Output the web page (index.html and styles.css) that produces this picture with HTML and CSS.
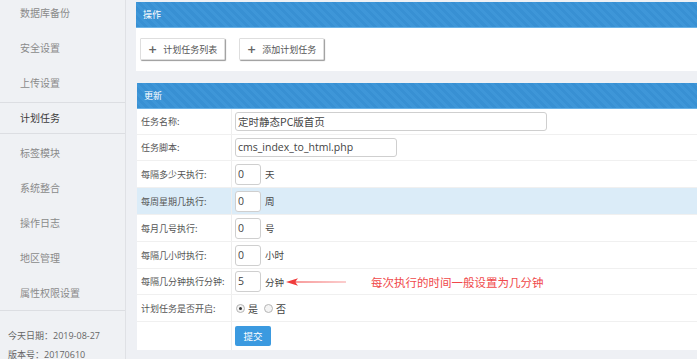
FILE: index.html
```
<!DOCTYPE html>
<html lang="zh-CN">
<head>
<meta charset="utf-8">
<title>计划任务</title>
<link rel="stylesheet" href="styles.css">
</head>
<body>
<aside class="sidebar">
  <ul class="menu">
    <li class="menu-item">数据库备份</li>
    <li class="menu-item">安全设置</li>
    <li class="menu-item">上传设置</li>
    <li class="menu-item active">计划任务</li>
    <li class="menu-item">标签模块</li>
    <li class="menu-item">系统整合</li>
    <li class="menu-item">操作日志</li>
    <li class="menu-item">地区管理</li>
    <li class="menu-item">属性权限设置</li>
  </ul>
  <div class="info">
    <p class="info-line">今天日期：2019-08-27</p>
    <p class="info-line">版本号：20170610</p>
  </div>
</aside>
<main class="content">
  <section class="panel">
    <div class="panel-head">操作</div>
    <div class="panel-body actions">
      <button class="btn"><span class="plus">+</span>计划任务列表</button>
      <button class="btn"><span class="plus">+</span>添加计划任务</button>
    </div>
  </section>
  <section class="panel panel-form">
    <div class="panel-head">更新</div>
    <div class="form">
      <div class="row"><div class="label">任务名称:</div><div class="value"><span class="input input-wide">定时静态PC版首页</span></div></div>
      <div class="row"><div class="label">任务脚本:</div><div class="value"><span class="input input-mid latin">cms_index_to_html.php</span></div></div>
      <div class="row tall"><div class="label">每隔多少天执行:</div><div class="value"><span class="input input-small latin">0</span><span class="unit">天</span></div></div>
      <div class="row tall hl"><div class="label">每周星期几执行:</div><div class="value"><span class="input input-small latin">0</span><span class="unit">周</span></div></div>
      <div class="row tall"><div class="label">每月几号执行:</div><div class="value"><span class="input input-small latin">0</span><span class="unit">号</span></div></div>
      <div class="row tall"><div class="label">每隔几小时执行:</div><div class="value"><span class="input input-small latin">0</span><span class="unit">小时</span></div></div>
      <div class="row"><div class="label">每隔几分钟执行分钟:</div><div class="value"><span class="input input-small latin">5</span><span class="unit">分钟</span>
        <svg class="arrow" width="60" height="10" viewBox="0 0 60 10"><path d="M0 5 L12 1.2 L9.5 4.4 L60 4.7 L60 5.3 L9.5 5.6 L12 8.8 Z" fill="#f03c3c"/></svg>
        <span class="note">每次执行的时间一般设置为几分钟</span></div></div>
      <div class="row tall"><div class="label">计划任务是否开启:</div><div class="value"><span class="radio checked"></span><span class="radio-text">是</span><span class="radio"></span><span class="radio-text">否</span></div></div>
      <div class="row last"><div class="label"></div><div class="value"><button class="submit">提交</button></div></div>
    </div>
  </section>
</main>
</body>
</html>
```
FILE: styles.css
```
* { box-sizing: border-box; }
html, body { margin: 0; padding: 0; }
body {
  width: 697px;
  height: 359px;
  overflow: hidden;
  display: flex;
  background: #eef0f4;
  font-family: "Noto Sans CJK SC", "Noto Sans", sans-serif;
  color: #555;
}
.sidebar {
  width: 126px;
  flex: none;
  background: #eff1f4;
  border-right: 1px solid #dfe1e5;
  display: flex;
  flex-direction: column;
}
.menu {
  list-style: none;
  margin: -5px 0 0;
  padding: 0;
  border-bottom: 1px solid #dcdee2;
}
.menu-item {
  height: 35px;
  line-height: 35px;
  padding-left: 20px;
  font-size: 10px;
  color: #8a8a8a;
}
.menu-item.active {
  color: #3a3a3a;
  background:
    linear-gradient(#dcdee2, #dcdee2) 0 2px / 100% 1px no-repeat,
    linear-gradient(#dcdee2, #dcdee2) 0 33px / 100% 1px no-repeat;
}
.info { padding: 15px 0 0 8px; }
.info-line {
  margin: 0;
  font-family: "Open Sans", "Noto Sans CJK SC", sans-serif;
  font-size: 9px;
  line-height: 19px;
  color: #666;
}
.content {
  flex: 1;
  padding: 2px 0 0 10px;
  display: flex;
  flex-direction: column;
  gap: 12px;
  min-width: 0;
}
.panel { background: #fff; }
.panel-form { margin-left: 1px; }
.panel-head {
  height: 26px;
  line-height: 25px;
  padding-left: 7px;
  font-size: 9px;
  color: #fff;
  border-bottom: 1px solid #6bb2e6;
  background: repeating-linear-gradient(45deg, #3890d3 0 3px, #3e96d8 3px 6px);
}
.actions {
  height: 43px;
  padding: 10px 0 0 4px;
  display: flex;
  gap: 14px;
  align-items: flex-start;
}
.btn {
  width: 85px;
  height: 22px;
  padding: 0 0 0 7px;
  border: 1px solid #dedede;
  border-radius: 1px;
  background: #fff;
  box-shadow: 1px 1px 1px #9a9a9a;
  font-family: "Noto Sans CJK SC", sans-serif;
  font-size: 9px;
  color: #555;
  display: flex;
  align-items: center;
}
.plus {
  font-size: 11px;
  font-weight: bold;
  color: #666;
  margin-right: 6px;
  font-family: "DejaVu Sans", sans-serif;
}
.form { display: flex; flex-direction: column; }
.row {
  display: flex;
  height: 26px;
  border-bottom: 1px solid #f0f0f0;
}
.row.tall { height: 27px; }
.row.last { height: 28px; border-bottom: none; }
.row.hl { background: #dbecf8; }
.label {
  width: 95px;
  flex: none;
  padding-left: 4px;
  font-size: 9px;
  display: flex;
  align-items: center;
  border-right: 1px solid #eeeeee;
}
.value {
  flex: 1;
  display: flex;
  align-items: center;
  padding-left: 3px;
}
.input {
  height: 19px;
  border: 1px solid #cfcfcf;
  border-radius: 3px;
  background: #fff;
  padding-left: 2px;
  font-size: 10.5px;
  line-height: 17px;
  color: #444;
  white-space: nowrap;
}
.latin { font-family: "Open Sans", "Noto Sans CJK SC", sans-serif; }
.input-wide { width: 312px; }
.input-mid { width: 162px; }
.input-small { width: 26px; height: 21px; line-height: 19px; }
.unit {
  font-size: 9.5px;
  margin-left: 4px;
  color: #444;
}
.arrow { margin-left: 2px; flex: none; }
.note {
  margin-left: 25px;
  font-size: 11.5px;
  color: #f0484a;
}
.radio {
  width: 9px;
  height: 9px;
  border: 1px solid #b5b5b5;
  border-radius: 50%;
  background: #f4f4f4;
  margin-left: 1px;
  display: flex;
  align-items: center;
  justify-content: center;
}
.radio.checked::after {
  content: "";
  width: 3px;
  height: 3px;
  border-radius: 50%;
  background: #333;
}
.radio-text {
  font-size: 10px;
  color: #444;
  margin: 0 5px 0 3px;
}
.submit {
  width: 36px;
  height: 20px;
  border: none;
  border-radius: 2px;
  background: #3b9ae0;
  color: #fff;
  font-family: "Noto Sans CJK SC", sans-serif;
  font-size: 9.5px;
  padding: 0;
}
```
